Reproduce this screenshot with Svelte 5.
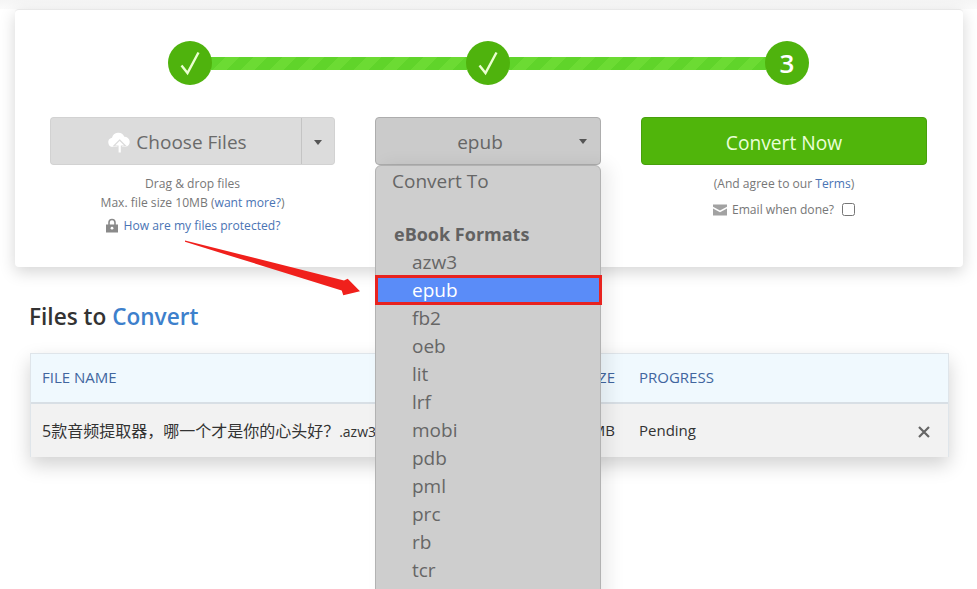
<script>
  const steps = ['done', 'done', 3];
  const formats = ['azw3', 'epub', 'fb2', 'oeb', 'lit', 'lrf', 'mobi', 'pdb', 'pml', 'prc', 'rb', 'tcr'];
  const selected = 'epub';
  const fileName = '5款音频提取器\uFF0C哪一个才是你的心头好\uFF1F';
</script>

<div class="page">
  <section class="card">
    <div class="stepper">
      {#each steps as step, i}
        {#if i > 0}<div class="bar"></div>{/if}
        <div class="circle">
          {#if step === 'done'}
            <svg width="24" height="26" viewBox="0 0 24 26" fill="none" stroke="#eaffd0" stroke-width="2.4">
              <path d="M3.5 15.5 L9.5 23 L20.5 2.5" />
            </svg>
          {:else}
            {step}
          {/if}
        </div>
      {/each}
    </div>

    <div class="actions">
      <div class="col">
        <div class="choose">
          <button class="choose-main">
            <svg width="24" height="24" viewBox="0 0 24 24">
              <path fill="#fff" d="M6 17a4.7 4.7 0 0 1-1-9.3 6.5 6.5 0 0 1 12.3-1 5.2 5.2 0 0 1 1.2 10.3 Z" />
              <path fill="#fff" stroke="#dcdcdc" stroke-width="1.2" d="M12.6 10 L18.6 16 H14.4 V23 H11 V16 H6.8 Z" />
            </svg>
            Choose Files
          </button>
          <button class="choose-caret" aria-label="More"><span class="caret"></span></button>
        </div>
        <p class="help">Drag &amp; drop files</p>
        <p class="help">Max. file size 10MB (<a href="#more">want more?</a>)</p>
        <p class="help protected">
          <svg width="14" height="15" viewBox="0 0 14 15" fill="#8a8a8a">
            <path d="M1 6.5 h12 v8 H1 Z M3.2 6.5 V4.5 a3.8 3.8 0 0 1 7.6 0 V6.5 H9.2 V4.5 a2.2 2.2 0 0 0-4.4 0 V6.5 Z" />
            <circle cx="7" cy="10.2" r="1.4" fill="#fff" />
          </svg>
          <a href="#protected">How are my files protected?</a>
        </p>
      </div>

      <div class="col select-col">
        <button class="select">epub<span class="caret"></span></button>
      </div>

      <div class="col">
        <button class="convert">Convert Now</button>
        <p class="help">(And agree to our <a href="#terms">Terms</a>)</p>
        <p class="help email">
          <svg width="14" height="12" viewBox="0 0 14 12" fill="#a2a2a2">
            <path d="M0 0.5 h14 v2.3 L7 6.6 0 2.8 Z M0 4.4 L7 8.2 14 4.4 V11.5 H0 Z" />
          </svg>
          Email when done?
          <input type="checkbox" />
        </p>
      </div>
    </div>
  </section>

  <h2>Files to <span>Convert</span></h2>

  <div class="table">
    <div class="row head">
      <div>FILE NAME</div>
      <div class="size">SIZE</div>
      <div>PROGRESS</div>
      <div></div>
    </div>
    <div class="row body">
      <div class="name">{fileName}<span class="ext">.azw3</span></div>
      <div class="size">1.2 MB</div>
      <div>Pending</div>
      <div class="remove">
        <svg width="12" height="12" viewBox="0 0 12 12" stroke="#666" stroke-width="2.2" fill="none">
          <path d="M1 1 L11 11 M11 1 L1 11" />
        </svg>
      </div>
    </div>
  </div>

  <div class="menu">
    <div class="menu-title">Convert To</div>
    <div class="menu-group">eBook Formats</div>
    {#each formats as format}
      <div class="menu-item" class:active={format === selected}>{format}</div>
    {/each}
  </div>

  <svg class="pointer" width="190" height="64" viewBox="0 0 190 64">
    <path d="M0 -0.6 L0 0.8 L156.7 49.5 L158.3 54.3 L175 50.3 L162.7 37.7 L159 39.5 Z" fill="#f0201c" />
  </svg>
</div>

<style>
  :global(body) {
    overflow: hidden;
  }

  .page {
    position: relative;
    height: 589px;
    overflow: hidden;
    box-sizing: border-box;
    padding: 9px 14px 0 15px;
    background: linear-gradient(#f5f5f5 0, #fbfbfb 9px, #fff 9px);
    font-family: 'Open Sans', 'Noto Sans CJK SC', sans-serif;
    color: #333;
  }

  .card {
    height: 258px;
    box-sizing: border-box;
    padding: 31px 36px 0 35px;
    background: #fff;
    border-radius: 4px;
    border-top: 1px solid #e8e8e8;
    box-shadow: 0 5px 16px rgba(0, 0, 0, 0.17);
  }

  .stepper {
    display: flex;
    align-items: center;
    width: 641px;
    margin: 0 0 32px 118px;
  }

  .circle {
    flex: none;
    width: 44px;
    height: 44px;
    border-radius: 50%;
    background: #4fb30d;
    color: #fff;
    display: flex;
    align-items: center;
    justify-content: center;
    font-size: 26px;
    font-weight: 600;
    position: relative;
    z-index: 1;
  }

  .bar {
    flex: 1;
    height: 13px;
    margin: 0 -1px;
    background: repeating-linear-gradient(-45deg, #60d42a 0 10px, #6cdb33 10px 20px);
  }

  .bar:nth-child(2) {
    flex: 0 0 256px;
  }

  .actions {
    display: grid;
    grid-template-columns: 285px 226px 286px;
    gap: 40px;
  }

  .col {
    text-align: center;
  }

  button {
    font-family: inherit;
    cursor: pointer;
  }

  .choose {
    display: flex;
    height: 48px;
    margin-bottom: 9px;
  }

  .choose-main {
    flex: 1;
    display: flex;
    align-items: center;
    justify-content: center;
    gap: 5px;
    padding: 2px 0 0 2px;
    font-size: 19px;
    color: #6a6a6a;
    background: #dcdcdc;
    border: 1px solid #d2d2d2;
    border-right: 1px solid #c4c4c4;
    border-radius: 4px 0 0 4px;
  }

  .choose-caret {
    flex: none;
    width: 33px;
    padding: 0;
    background: #dcdcdc;
    border: 1px solid #d2d2d2;
    border-left: 0;
    border-radius: 0 4px 4px 0;
  }

  .caret {
    display: inline-block;
    border: 4px solid transparent;
    border-top: 5px solid #555;
    border-bottom: 0;
    vertical-align: middle;
  }

  .help {
    margin: 0;
    font-size: 12.1px;
    line-height: 19px;
    color: #777;
  }

  .help a {
    color: #4a74b4;
    text-decoration: none;
  }

  .protected {
    margin-top: 4px;
    display: flex;
    align-items: center;
    justify-content: center;
    gap: 5px;
  }

  .select {
    position: relative;
    width: 100%;
    height: 48px;
    font-size: 19px;
    color: #666;
    background: #cbcbcb;
    border: 1px solid #adadad;
    border-radius: 4px;
    padding: 2px 16px 0 0;
  }

  .select .caret {
    position: absolute;
    right: 13px;
    top: 21px;
  }

  .convert {
    width: 100%;
    height: 48px;
    margin-bottom: 9px;
    padding: 2px 0 0;
    font-size: 19.2px;
    color: #eaffd8;
    background: #50b50b;
    border: 1px solid #47a00c;
    border-radius: 4px;
  }

  .email {
    margin-top: 7px;
    display: flex;
    align-items: center;
    justify-content: center;
    gap: 5px;
  }

  .email input {
    width: 13px;
    height: 13px;
    margin: 0 0 0 3px;
  }

  h2 {
    margin: 35px 0 21px 14px;
    font-size: 22.6px;
    line-height: 30px;
    font-weight: 600;
    color: #333;
  }

  h2 span {
    color: #3d80cc;
  }

  .table {
    margin-left: 15px;
    width: 917px;
    border: 1px solid #dfe5ea;
    border-bottom: 0;
    box-shadow: 0 8px 18px rgba(0, 0, 0, 0.18);
    font-size: 15px;
  }

  .row {
    display: grid;
    grid-template-columns: 537px 60px 1fr 48px;
    align-items: center;
  }

  .row > div {
    padding: 0 12px 2px 11px;
    white-space: nowrap;
  }

  .head {
    height: 48px;
    color: #41669e;
    background: #f0f9fe;
    border-bottom: 2px solid #d8dfe5;
  }

  .body {
    height: 53px;
    color: #333;
    background: #f2f2f2;
  }

  .row > .size {
    display: flex;
    justify-content: flex-end;
    padding-left: 0;
    padding-right: 13px;
  }

  .name {
    font-size: 16px;
  }

  .ext {
    font-size: 14px;
  }

  .row > .remove {
    display: flex;
    align-items: center;
    padding: 2px 0 0 18px;
  }

  .menu {
    position: absolute;
    left: 375px;
    top: 165px;
    width: 226px;
    height: 460px;
    box-sizing: border-box;
    padding-top: 2px;
    background: #cecece;
    border: 1px solid #b2b2b2;
    border-radius: 6px 6px 0 0;
    color: #666;
    box-shadow: 8px 0 18px rgba(0, 0, 0, 0.08);
  }

  .menu-title {
    padding-left: 16px;
    font-size: 19px;
    line-height: 26px;
  }

  .menu-group {
    margin-top: 26px;
    padding-left: 18px;
    font-size: 18px;
    font-weight: 700;
    line-height: 28px;
    color: #626262;
  }

  .menu-item {
    padding-left: 36px;
    font-size: 19px;
    line-height: 28px;
    height: 28px;
  }

  .menu-item.active {
    color: #fff;
    background: #5a8cf8;
    outline: 3px solid #e8231f;
    outline-offset: -2px;
    margin-right: -1px;
  }

  .pointer {
    position: absolute;
    left: 185px;
    top: 241px;
    overflow: visible;
  }
</style>
